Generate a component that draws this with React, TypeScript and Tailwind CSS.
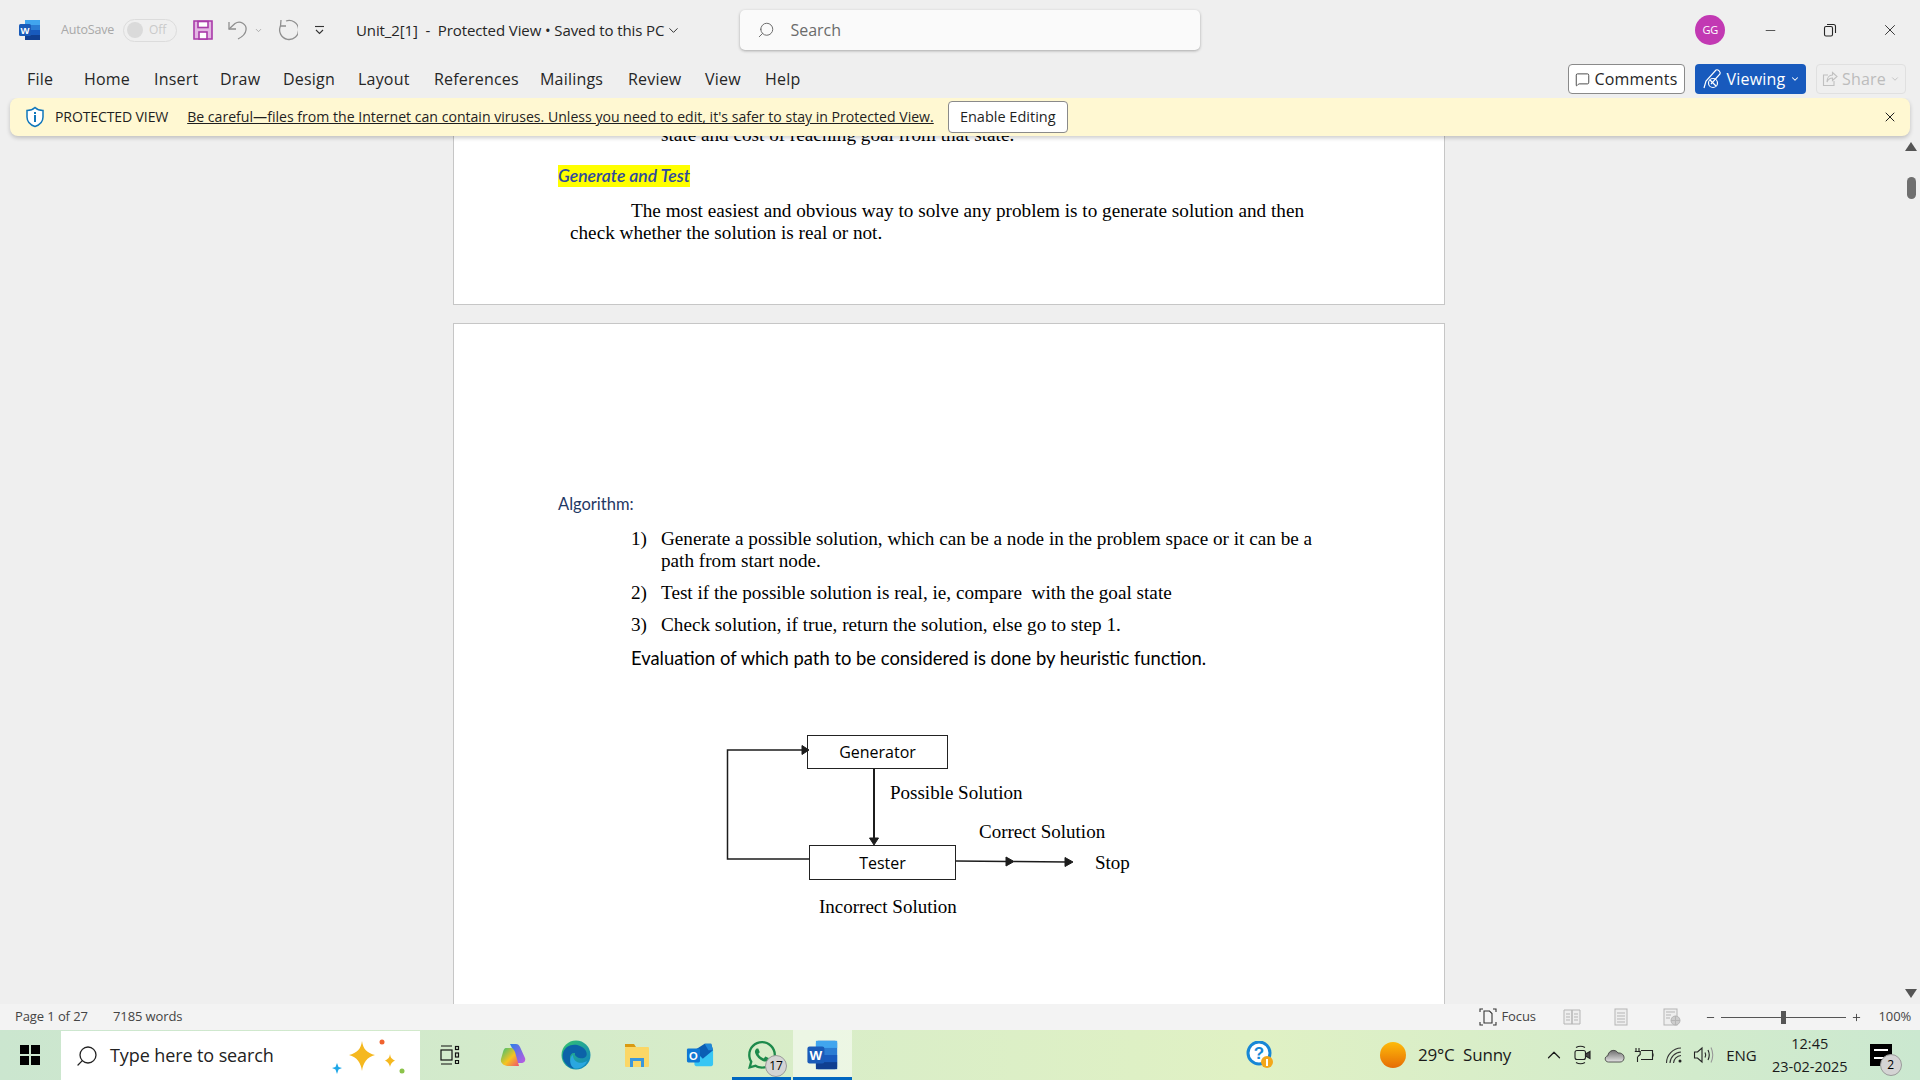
import { ChevronDown, ChevronUp, MessageSquare, Minus, Plus, Search, X } from "lucide-react";
import { FaWhatsapp } from "react-icons/fa";

const tabs = [
  { label: "File", cls: "w-[57px]" },
  { label: "Home", cls: "w-[70px]" },
  { label: "Insert", cls: "w-[66px]" },
  { label: "Draw", cls: "w-[63px]" },
  { label: "Design", cls: "w-[75px]" },
  { label: "Layout", cls: "w-[76px]" },
  { label: "References", cls: "w-[106px]" },
  { label: "Mailings", cls: "w-[88px]" },
  { label: "Review", cls: "w-[77px]" },
  { label: "View", cls: "w-[60px]" },
  { label: "Help", cls: "w-[50px]" },
];

const WordIcon = ({ size = 22 }: { size?: number }) => (
  <svg width={size} height={size} viewBox="0 0 24 24">
    <rect x="7" y="2" width="15" height="20" rx="1.5" fill="#2b7cd3" />
    <rect x="7" y="2" width="15" height="5" fill="#41a5ee" />
    <rect x="7" y="12" width="15" height="5" fill="#185abd" />
    <rect x="7" y="17" width="15" height="5" fill="#103f91" />
    <rect x="1" y="6" width="12" height="12" rx="1.5" fill="#1a5bb8" />
    <text x="7" y="15.5" textAnchor="middle" fontSize="9.5" fontWeight="700" fill="#fff" fontFamily="Liberation Sans">W</text>
  </svg>
);

const TaskButton = ({ children, active, line, cls }: { children: React.ReactNode; active?: boolean; line?: boolean; cls: string }) => (
  <div className={`relative flex h-full items-center justify-center ${cls} ${active ? "bg-white/50" : ""}`}>
    {children}
    {line && <div className="absolute bottom-0 left-0 right-0 h-[3px] bg-[#0067c0]" />}
  </div>
);

const Badge = ({ n, cls }: { n: number; cls: string }) => (
  <span className={`absolute flex h-[22px] w-[22px] items-center justify-center rounded-full border border-[#9a9a9a] bg-[#d4d4d4] text-[12px] text-black ${cls}`}>{n}</span>
);

const Diagram = () => (
  <div className="relative mt-[31px] h-[200px] w-full font-['Liberation_Serif'] text-[19px] text-black">
    <svg className="absolute left-0 top-0" width="800" height="200" fill="none" stroke="#1c1c1c">
      <path d="M355 159 H273.5 V50 H349" strokeWidth="1.5" />
      <path d="M348 45.5 L355 50 L348 54.5 Z" fill="#1c1c1c" />
      <path d="M420 68 V139" strokeWidth="2" />
      <path d="M415.5 138 L420 145 L424.5 138 Z" fill="#1c1c1c" />
      <path d="M502 161 L554 161.5" strokeWidth="1.5" />
      <path d="M552 157 L560 161.5 L552 166 Z" fill="#1c1c1c" />
      <path d="M560 161.5 L613 162" strokeWidth="1.5" />
      <path d="M611 157.5 L619 162 L611 166.5 Z" fill="#1c1c1c" />
    </svg>
    <div className="absolute left-[353px] top-[35px] flex h-[34px] w-[141px] items-center justify-center border border-[#222] font-['Open_Sans'] text-[16px]">Generator</div>
    <div className="absolute left-[355px] top-[145px] flex h-[35px] w-[147px] items-center justify-center border border-[#222] font-['Open_Sans'] text-[16px]">Tester</div>
    <span className="absolute left-[436px] top-[82px]">Possible Solution</span>
    <span className="absolute left-[525px] top-[121px]">Correct Solution</span>
    <span className="absolute left-[641px] top-[152px]">Stop</span>
    <span className="absolute left-[365px] top-[196px]">Incorrect Solution</span>
  </div>
);

export default function App() {
  return (
    <div className="flex h-[1080px] w-[1920px] flex-col overflow-hidden bg-[#efefef] font-['Open_Sans',sans-serif] text-[#262626]">
      {/* Title bar */}
      <div className="flex h-[50px] shrink-0 items-center pt-[10px]">
        <div className="ml-[18px] w-[43px]"><WordIcon size={24} /></div>
        <span className="w-[62px] text-[12.5px] tracking-[-0.2px] text-[#a8a8a8]">AutoSave</span>
        <div className="flex h-[23px] w-[54px] items-center gap-[6px] rounded-full border border-[#dcdcdc] px-[3px] text-[12px] text-[#cacaca]">
          <span className="h-[16px] w-[16px] rounded-full bg-[#dadada]" />Off
        </div>
        <svg className="ml-[15px]" width="22" height="22" viewBox="0 0 22 22" fill="#e3b6e3" stroke="#a93aa9" strokeWidth="1.6">
          <path d="M2 2 H20 V20 H2 Z" />
          <rect x="6" y="2.5" width="10" height="6" fill="#fff" />
          <rect x="7" y="13" width="8" height="7" fill="#fff" />
        </svg>
        <svg className="ml-[13px]" width="22" height="22" viewBox="0 0 22 22" fill="none" stroke="#8f8f8f" strokeWidth="1.3">
          <path d="M2 3 V10 H9" />
          <path d="M2 10 L8 4.5 C13 1 20 5 19 11 C18.5 15 15 18 11 20" />
        </svg>
        <ChevronDown className="ml-[5px] h-[9px] w-[9px] text-[#999]" />
        <svg className="ml-[11px]" width="24" height="24" viewBox="0 0 24 24" fill="none" stroke="#8f8f8f" strokeWidth="1.3">
          <path d="M7 2 L6.500 8 L12 8" />
          <path d="M12 3 A9.500 9.500 0 1 1 6.500 8" />
        </svg>
        <svg className="ml-[16px]" width="11" height="11" viewBox="0 0 11 11" fill="none" stroke="#333" strokeWidth="1.1">
          <path d="M1 1.500 H10" />
          <path d="M2 5 L5.500 8.500 L9 5" />
        </svg>
        <span className="ml-[31px] whitespace-pre text-[15px] tracking-[-0.1px]">Unit_2[1]  -  Protected View • Saved to this PC</span>
        <ChevronDown className="ml-[2px] h-[15px] w-[15px]" strokeWidth={1.5} />
        <div className="ml-[59px] flex h-[40px] w-[460px] items-center rounded-[5px] bg-[#fafafa] pl-[17px] text-[16px] text-[#6b6b6b] shadow-[0_1px_3px_rgba(0,0,0,0.3)]">
          <Search className="h-[18px] w-[18px] -scale-x-100" strokeWidth={1.3} />
          <span className="ml-[15px]">Search</span>
        </div>
        <div className="ml-[495px] flex h-[30px] w-[30px] items-center justify-center rounded-full bg-[#c239b3] text-[11px] text-white">GG</div>
        <Minus className="ml-[38px] h-[15px] w-[15px]" strokeWidth={1.2} />
        <svg className="ml-[45px]" width="14" height="14" viewBox="0 0 14 14" fill="none" stroke="#262626" strokeWidth="1.1">
          <rect x="1.5" y="3.5" width="8" height="9.5" rx="1.5" />
          <path d="M4 1.5 H10.5 A2 2 0 0 1 12.5 3.5 V10" />
        </svg>
        <X className="ml-[44px] h-[18px] w-[18px]" strokeWidth={1.2} />
      </div>

      {/* Ribbon tabs */}
      <div className="flex h-[48px] shrink-0 items-center pl-[27px] pt-[10px] text-[16px] tracking-[0.2px]">
        {tabs.map((t) => (
          <span key={t.label} className={t.cls}>{t.label}</span>
        ))}
        <div className="ml-auto mr-[14px] flex items-center gap-[10px] text-[16px] tracking-[0.2px]">
          <div className="flex h-[30px] w-[117px] items-center justify-center gap-[4px] rounded-[4px] border border-[#8a8a8a] bg-white">
            <MessageSquare className="h-[15px] w-[15px]" strokeWidth={1.3} />Comments
          </div>
          <div className="flex h-[30px] w-[111px] items-center justify-center gap-[2px] rounded-[4px] bg-[#185abd] text-white">
            <svg width="24" height="24" viewBox="0 0 24 24" fill="none" stroke="#fff" strokeWidth="1.2">
              <path d="M3 21 L5 14 L15 3 C17 2 20 5 19 7 L10 17" />
              <circle cx="12" cy="16" r="4.5" />
              <path d="M9 13 L15 19" />
            </svg>
            Viewing<ChevronDown className="ml-[3px] h-[10px] w-[10px]" strokeWidth={2.5} />
          </div>
          <div className="flex h-[30px] w-[90px] items-center justify-center gap-[4px] rounded-[4px] border border-[#e0e0e0] text-[#bcbcbc]">
            <svg width="16" height="16" viewBox="0 0 16 16" fill="none" stroke="#c0c0c0" strokeWidth="1.100">
              <path d="M6 4 H1.500 V14.500 H12 V10" />
              <path d="M10.500 1.500 L15 5.500 L10.500 9.500 V7 C8 7 6 8.500 5 11 C5 7 7 4 10.500 4 Z" />
            </svg>
            Share<ChevronDown className="h-[10px] w-[10px]" />
          </div>
        </div>
      </div>

      {/* Document area */}
      <div className="relative min-h-0 flex-1 overflow-hidden">
        <div className="absolute left-[10px] right-[10px] top-0 z-10 flex h-[38px] items-center rounded-[8px] bg-[#fff8d2] pl-[15px] text-[14.1px] text-[#1f1f1f] shadow-[0_2px_4px_rgba(0,0,0,0.2)]">
          <svg width="20" height="22" viewBox="0 0 20 22" fill="none">
            <path d="M10 1.5 C12 3.5 15 4.5 18 4.5 V11 C18 15.5 14.5 19 10 20.5 C5.5 19 2 15.5 2 11 V4.5 C5 4.5 8 3.5 10 1.5 Z" stroke="#1177bb" strokeWidth="1.5" fill="#fff" />
            <rect x="9" y="9" width="2" height="7" fill="#1177bb" />
            <rect x="9" y="6" width="2" height="2" fill="#1177bb" />
          </svg>
          <span className="ml-[10px] tracking-[-0.15px]">PROTECTED VIEW</span>
          <span className="ml-[19px] underline">Be careful—files from the Internet can contain viruses. Unless you need to edit, it's safer to stay in Protected View.</span>
          <div className="ml-[14px] flex h-[32px] w-[120px] items-center justify-center rounded-[4px] border border-[#8a8a8a] bg-white text-[14.5px]">Enable Editing</div>
          <X className="ml-auto mr-[12px] h-[16px] w-[16px]" strokeWidth={1.5} />
        </div>

        {/* Scrollbar */}
        <div className="absolute bottom-0 right-0 top-[38px] flex w-[18px] flex-col items-center">
          <svg className="mt-[6px]" width="12" height="9" viewBox="0 0 12 9"><path d="M6 0 L12 9 H0 Z" fill="#555" /></svg>
          <div className="mt-[26px] h-[22px] w-[9px] rounded-full bg-[#6f6f6f]" />
          <svg className="mb-[6px] mt-auto" width="12" height="9" viewBox="0 0 12 9"><path d="M6 9 L12 0 H0 Z" fill="#555" /></svg>
        </div>

        <div className="ml-[453px] w-[992px] font-['Liberation_Serif',serif] text-[19.2px] leading-[22px] text-black">
          {/* Page 1, top hidden under the message bar */}
          <div className="h-[207px] border border-t-0 border-[#c6c6c6] bg-white pl-[104px] pt-[26px]">
            <p className="pl-[103px]">state and cost of reaching goal from that state.</p>
            <p className="mt-[19px] w-fit bg-[#ffff00] font-['Lato',sans-serif] text-[17.5px] font-semibold italic text-[#2f4a9e]">Generate and Test</p>
            <p className="mt-[13px] w-[760px] pl-[12px] indent-[61px]">The most easiest and obvious way to solve any problem is to generate solution and then check whether the solution is real or not.</p>
          </div>
          {/* Page 2 */}
          <div className="mt-[18px] h-[800px] border border-[#c6c6c6] bg-white pt-[169px]">
            <p className="pl-[104px] font-['Lato',sans-serif] text-[16.5px] text-[#1f3864]">Algorithm:</p>
            <ol className="mt-[13px] pl-[177px] pr-[110px]">
              <li className="flex"><span className="w-[30px] shrink-0">1)</span><span>Generate a possible solution, which can be a node in the problem space or it can be a path from start node.</span></li>
              <li className="mt-[10px] flex"><span className="w-[30px] shrink-0">2)</span><span className="whitespace-pre">Test if the possible solution is real, ie, compare  with the goal state</span></li>
              <li className="mt-[10px] flex"><span className="w-[30px] shrink-0">3)</span><span>Check solution, if true, return the solution, else go to step 1.</span></li>
            </ol>
            <p className="mt-[11px] pl-[177px] font-['Lato',sans-serif] text-[18.4px]">Evaluation of which path to be considered is done by heuristic function.</p>
            <Diagram />
          </div>
        </div>
      </div>

      {/* Status bar */}
      <div className="flex h-[26px] shrink-0 items-center bg-[#f3f3f3] text-[13px] tracking-[-0.1px] text-[#444]">
        <span className="ml-[15px] w-[98px]">Page 1 of 27</span>
        <span>7185 words</span>
        <svg className="ml-[1297px]" width="18" height="18" viewBox="0 0 18 18" fill="none" stroke="#333" strokeWidth="1.1">
          <path d="M1 4 V1 H4 M14 1 H17 V4 M1 14 V17 H4 M14 17 H17 V14" />
          <path d="M5 3 H10.5 L13 5.5 V15 H5 Z" />
        </svg>
        <span className="ml-[4px] w-[62px]">Focus</span>
        <svg width="18" height="16" viewBox="0 0 18 16" fill="#eee" stroke="#b5b5b5">
          <path d="M1 1 H9 V15 H1 Z M9 1 H17 V15 H9 Z" />
          <path d="M3 5 H7 M3 8 H7 M3 11 H7 M11 5 H15 M11 8 H15 M11 11 H15" />
        </svg>
        <svg className="ml-[33px]" width="14" height="18" viewBox="0 0 14 18" fill="#eee" stroke="#b5b5b5"><rect x="1" y="1" width="12" height="16" /><path d="M3 5 H11 M3 8 H11 M3 11 H11 M3 14 H11" /></svg>
        <svg className="ml-[35px]" width="18" height="18" viewBox="0 0 18 18" fill="#eee" stroke="#b5b5b5">
          <rect x="1" y="1" width="13" height="16" />
          <path d="M3 4 H12 M3 7 H8 M3 10 H7" />
          <circle cx="12.5" cy="12.5" r="4.5" fill="#ccc" />
          <path d="M8 12.5 H17 M12.5 8 V17" />
        </svg>
        <Minus className="ml-[24px] h-[11px] w-[11px]" />
        <div className="relative ml-[5px] h-px w-[125px] bg-[#555]">
          <div className="absolute left-[60px] top-[-6px] h-[13px] w-[5px] bg-[#555]" />
        </div>
        <Plus className="ml-[5px] h-[11px] w-[11px]" />
        <span className="ml-[16px]">100%</span>
      </div>

      {/* Taskbar */}
      <div className="flex h-[50px] shrink-0 items-center bg-gradient-to-r from-[#cbe6cf] via-[#e0f1c4] via-65% to-[#cbe8d0] text-[#1a1a1a]">
        <div className="ml-[20px] grid h-[20px] w-[20px] grid-cols-2 gap-[1.5px]">
          <span className="bg-black" /><span className="bg-black" /><span className="bg-black" /><span className="bg-black" />
        </div>
        <div className="relative ml-[21px] flex h-[49px] w-[359px] items-center self-end bg-white pl-[14px] text-[18px] tracking-[-0.1px] text-[#222]">
          <Search className="h-[24px] w-[24px] -scale-x-100" strokeWidth={1.3} />
          <span className="ml-[11px]">Type here to search</span>
          <svg className="absolute right-[12px] top-[8px]" width="76" height="36" viewBox="0 0 76 36">
            <path d="M30 2 C31 10 35 14 43 16 C35 18 31 24 30 32 C29 24 25 18 17 16 C25 14 29 10 30 2 Z" fill="#f5b81f" />
            <path d="M58 15 C58.5 19 60 20 63 21.5 C60 23 58.5 25 58 28 C57.5 25 56 23 53 21.5 C56 20 57.5 19 58 15 Z" fill="#f5b81f" />
            <path d="M5 24 L6.5 28 L10 29 L6.5 30.5 L5 35 L3.5 30.5 L0 29 L3.5 28 Z" fill="#1ea7e8" />
            <circle cx="50" cy="3" r="2.5" fill="#f0622f" />
            <circle cx="70" cy="32" r="2.5" fill="#8bc34a" />
          </svg>
        </div>
        <svg className="ml-[20px]" width="20" height="20" viewBox="0 0 20 20" fill="none" stroke="#111" strokeWidth="1.2">
          <path d="M1 1 H12 M1 19 H12" /><rect x="1" y="5" width="11" height="10" /><rect x="15.5" y="1.5" width="3" height="3" /><rect x="15.5" y="8" width="3" height="4" /><path d="M15.5 15.5 H18.5 V18.5 H15.5 Z" />
        </svg>
        <TaskButton cls="ml-[39px] w-[28px]">
          <svg width="30" height="30" viewBox="0 0 28 28">
            <defs>
              <linearGradient id="cp1" x1="0" y1="0" x2="1" y2="1"><stop offset="0" stopColor="#2a7fe8" /><stop offset="1" stopColor="#c05ae0" /></linearGradient>
              <linearGradient id="cp2" x1="0" y1="0" x2="1" y2="1"><stop offset="0" stopColor="#33c07a" /><stop offset="0.55" stopColor="#f6c420" /><stop offset="1" stopColor="#ef4f70" /></linearGradient>
            </defs>
            <path d="M11 3 H17 C19 3 20 4 21 6 L26 17 C27 20 25 22 22 22 H18 C17 15 14 9 11 3 Z" fill="url(#cp1)" />
            <path d="M7 7 H12 C14 7 15 9 16 11 L20 25 H10 C6 25 1 23 2 18 L4 11 C4.5 9 5.500 7 7 7 Z" fill="url(#cp2)" />
          </svg>
        </TaskButton>
        <TaskButton cls="ml-[33px] w-[32px]">
          <svg width="32" height="32" viewBox="0 0 32 32">
            <defs>
              <linearGradient id="ed1" x1="0" y1="0" x2="1" y2="1"><stop offset="0" stopColor="#34c46c" /><stop offset="1" stopColor="#0d7fc9" /></linearGradient>
            </defs>
            <circle cx="16" cy="16" r="14.5" fill="url(#ed1)" />
            <path d="M3 14 C5 6 14 4 20 7 C27 10 29 17 24 19 C20 20 14 18 15 14 C9 13 8 22 14 27 C17 30 10 30 7 26 C3 22 2 18 3 14 Z" fill="#0c62a8" />
            <path d="M13 16 C13 23 20 26 27 22 C25 27 20 30 15 29.5 C9 28 9 18 13 16 Z" fill="#2aa7e0" />
          </svg>
        </TaskButton>
        <TaskButton cls="ml-[31px] w-[28px]">
          <svg width="28" height="28" viewBox="0 0 28 28">
            <path d="M2 3 H11 L13 6 H2 Z" fill="#d99a12" />
            <rect x="2" y="6" width="24" height="20" rx="1" fill="#fbd766" />
            <path d="M7 26 V17 H21 V26 H18 V20 H10 V26 Z" fill="#3b97dc" />
          </svg>
        </TaskButton>
        <TaskButton cls="ml-[35px] w-[28px]">
          <svg width="30" height="30" viewBox="0 0 30 30">
            <path d="M9 10 H29 V25 C29 26 28 27 27 27 H11 C10 27 9 26 9 25 Z" fill="#37c6f4" />
            <path d="M9 10 L20 3 H27 L29 10 L18 19 Z" fill="#0a5fb4" />
            <path d="M20 3 H27 L29 10 H24 Z" fill="#1e88d8" />
            <rect x="1" y="8" width="14" height="15" rx="1.5" fill="#0f78d4" />
            <text x="8" y="20" textAnchor="middle" fontSize="12" fontWeight="700" fill="#fff" fontFamily="Liberation Sans">O</text>
          </svg>
        </TaskButton>
        <TaskButton line cls="ml-[18px] w-[59px]">
          <FaWhatsapp className="h-[32px] w-[32px] text-[#1d8a4b]" />
          <Badge n={17} cls="bottom-[3px] right-[4px]" />
        </TaskButton>
        <TaskButton active line cls="ml-[2px] w-[59px]"><WordIcon size={34} /></TaskButton>
        <svg className="ml-[394px]" width="28" height="28" viewBox="0 0 28 28">
          <circle cx="13" cy="12" r="11" fill="#fff" stroke="#1787d6" strokeWidth="3" />
          <text x="13" y="18" textAnchor="middle" fontSize="17" fontWeight="700" fill="#1787d6" fontFamily="Liberation Sans">?</text>
          <circle cx="21" cy="21" r="6" fill="#f3a71a" />
          <rect x="20" y="18" width="2" height="7" fill="#fff" />
        </svg>
        <span className="ml-[106px] h-[26px] w-[26px] rounded-full bg-gradient-to-b from-[#fdbb0a] to-[#e56c05]" />
        <span className="ml-[12px] whitespace-pre text-[17px] tracking-[-0.2px]">29°C  Sunny</span>
        <ChevronUp className="ml-[32px] h-[22px] w-[22px]" strokeWidth={1.3} />
        <svg className="ml-[9px]" width="17" height="20" viewBox="0 0 17 20" fill="none" stroke="#222" strokeWidth="1.100">
          <path d="M2 2.500 Q6.500 0 11 2.500 M2 17.500 Q6.500 20 11 17.500" />
          <rect x="1" y="5.500" width="10.500" height="9" rx="2" />
          <path d="M11.500 9 L16 6.500 V13.500 L11.500 11 Z" fill="#444" />
        </svg>
        <svg className="ml-[13px]" width="21" height="16" viewBox="0 0 21 16" stroke="#333" strokeWidth="0.8">
          <defs>
            <linearGradient id="cld" x1="0" y1="0" x2="0" y2="1"><stop offset="0" stopColor="#6f6f6f" /><stop offset="1" stopColor="#e4e4e4" /></linearGradient>
          </defs>
          <path d="M4.500 15 C0.500 15 0 9.500 3.800 8.800 C4.500 3 11.500 1.500 14 6 C17.500 5.500 20.500 8 20 11.500 C19.500 14 18 15 16 15 Z" fill="url(#cld)" />
        </svg>
        <svg className="ml-[9px]" width="20" height="14" viewBox="0 0 20 14" fill="none" stroke="#222" strokeWidth="1.100">
          <path d="M2 0 V3.500 M5 0 V3.500 M0.800 3.500 H6.200 V6.500 Q3.500 9 3.500 8.500 V14" />
          <path d="M7 2.500 H18.500 V11.500 H7" />
          <path d="M20 5.500 V8.500" />
        </svg>
        <svg className="ml-[11px]" width="19" height="18" viewBox="0 0 19 18" fill="none" stroke="#333" strokeWidth="1.100">
          <path d="M1.500 17 A15 15 0 0 1 16 2" />
          <path d="M5 17 A11.500 11.500 0 0 1 16 6" />
          <path d="M8.500 17 A8 8 0 0 1 16 9.500" />
          <circle cx="15" cy="15" r="1.500" fill="#222" stroke="none" />
        </svg>
        <svg className="ml-[9px]" width="21" height="18" viewBox="0 0 21 18" fill="none" stroke="#222" strokeWidth="1.100">
          <path d="M1.500 6 H4.500 L9 2 V16 L4.500 12 H1.500 Z" />
          <path d="M12 6.500 Q13.500 9 12 11.500" />
          <path d="M15 4 Q17.500 9 15 14" />
          <path d="M18 1.500 Q21.500 9 18 16.500" stroke="#999" />
        </svg>
        <span className="ml-[12px] text-[15px]">ENG</span>
        <div className="ml-[15px] flex w-[76px] flex-col items-center text-[14.5px] leading-[23px]">
          <span>12:45</span>
          <span>23-02-2025</span>
        </div>
        <div className="relative ml-[22px] h-[22px] w-[22px] bg-black">
          <div className="ml-[4px] mt-[5px] h-[10px] w-[14px] border-y-2 border-white" />
          <Badge n={2} cls="-bottom-[10px] -right-[10px]" />
        </div>
      </div>
    </div>
  );
}
